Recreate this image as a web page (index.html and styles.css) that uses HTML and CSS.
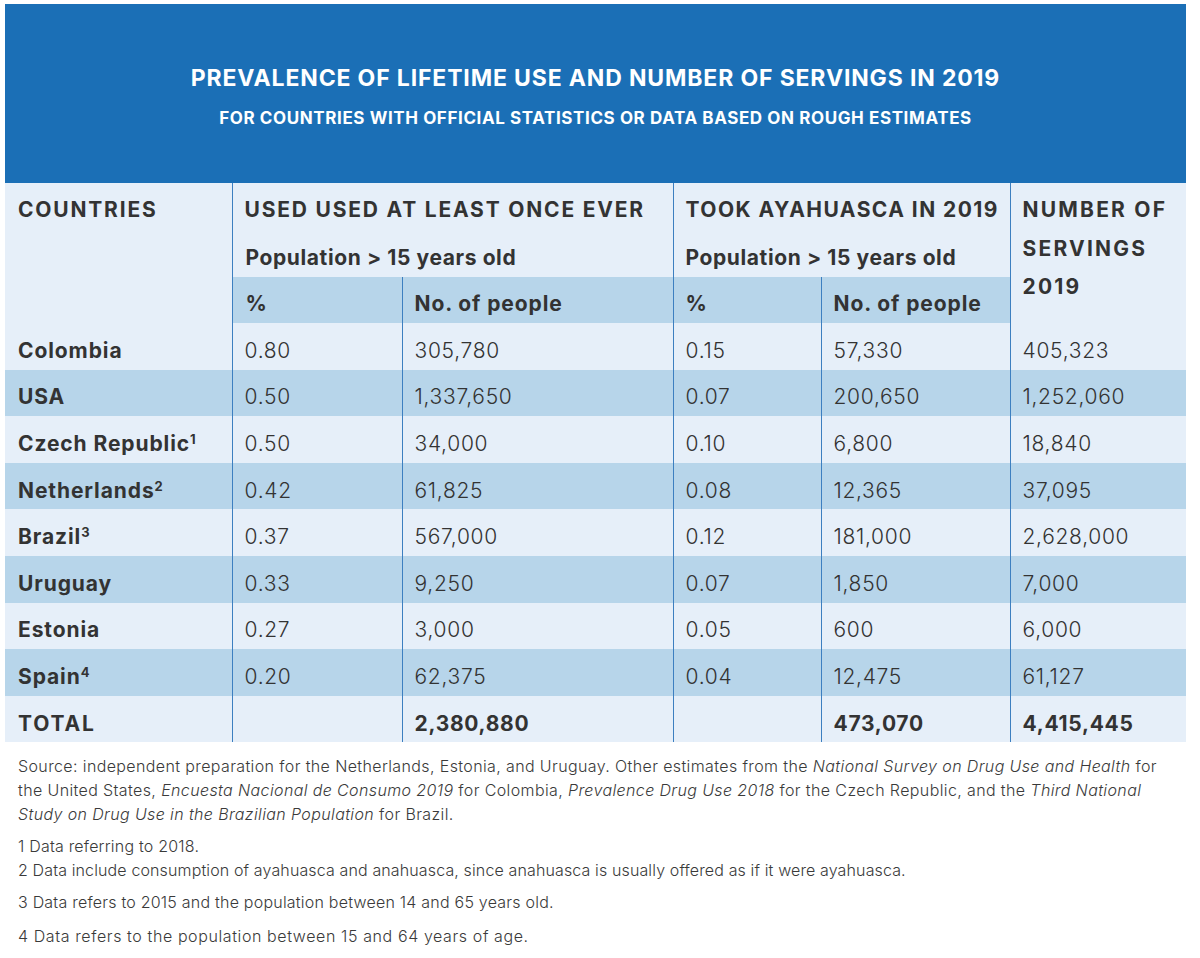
FILE: index.html
```html
<!DOCTYPE html>
<html lang="en">
<head>
<meta charset="utf-8">
<title>Prevalence of lifetime use and number of servings in 2019</title>
<link rel="stylesheet" href="styles.css">
</head>
<body>
<div class="panel">
  <header class="banner">
    <h1 class="title">PREVALENCE OF LIFETIME USE AND NUMBER OF SERVINGS IN 2019</h1>
    <p class="subtitle">FOR COUNTRIES WITH OFFICIAL STATISTICS OR DATA BASED ON ROUGH ESTIMATES</p>
  </header>
  <table class="data">
    <colgroup>
      <col class="c1"><col class="c2"><col class="c3"><col class="c4"><col class="c5"><col class="c6">
    </colgroup>
    <thead>
      <tr class="h1">
        <th class="lbl caps" rowspan="3">COUNTRIES</th>
        <th class="grp caps" colspan="2">USED USED AT LEAST ONCE EVER</th>
        <th class="grp caps grp-took" colspan="2">TOOK AYAHUASCA IN 2019</th>
        <th class="lbl serv caps" rowspan="3">NUMBER OF<br>SERVINGS<br>2019</th>
      </tr>
      <tr class="h2">
        <th class="pop" colspan="2">Population &gt; 15 years old</th>
        <th class="pop" colspan="2">Population &gt; 15 years old</th>
      </tr>
      <tr class="h3">
        <th class="sub">%</th>
        <th class="sub">No. of people</th>
        <th class="sub">%</th>
        <th class="sub">No. of people</th>
      </tr>
    </thead>
    <tbody>
      <tr><th>Colombia</th><td>0.80</td><td>305,780</td><td>0.15</td><td>57,330</td><td>405,323</td></tr>
      <tr class="alt"><th>USA</th><td>0.50</td><td>1,337,650</td><td>0.07</td><td>200,650</td><td>1,252,060</td></tr>
      <tr><th>Czech Republic<sup>1</sup></th><td>0.50</td><td>34,000</td><td>0.10</td><td>6,800</td><td>18,840</td></tr>
      <tr class="alt"><th>Netherlands<sup>2</sup></th><td>0.42</td><td>61,825</td><td>0.08</td><td>12,365</td><td>37,095</td></tr>
      <tr><th>Brazil<sup>3</sup></th><td>0.37</td><td>567,000</td><td>0.12</td><td>181,000</td><td>2,628,000</td></tr>
      <tr class="alt"><th>Uruguay</th><td>0.33</td><td>9,250</td><td>0.07</td><td>1,850</td><td>7,000</td></tr>
      <tr><th>Estonia</th><td>0.27</td><td>3,000</td><td>0.05</td><td>600</td><td>6,000</td></tr>
      <tr class="alt"><th>Spain<sup>4</sup></th><td>0.20</td><td>62,375</td><td>0.04</td><td>12,475</td><td>61,127</td></tr>
      <tr class="total"><th class="caps">TOTAL</th><td></td><td>2,380,880</td><td></td><td>473,070</td><td>4,415,445</td></tr>
    </tbody>
  </table>
  <div class="notes">
    <p class="source">Source: independent preparation for the Netherlands, Estonia, and Uruguay. Other estimates from the <em>National Survey on Drug Use and Health</em> for<br>the United States, <em>Encuesta Nacional de Consumo 2019</em> for Colombia, <em>Prevalence Drug Use 2018</em> for the Czech Republic, and the <em>Third National</em><br><em>Study on Drug Use in the Brazilian Population</em> for Brazil.</p>
    <p class="fn fn-1">1 Data referring to 2018.</p>
    <p class="fn fn-2">2 Data include consumption of ayahuasca and anahuasca, since anahuasca is usually offered as if it were ayahuasca.</p>
    <p class="fn fn-3">3 Data refers to 2015 and the population between 14 and 65 years old.</p>
    <p class="fn fn-4">4 Data refers to the population between 15 and 64 years of age.</p>
  </div>
</div>
</body>
</html>
```

FILE: styles.css
```css
html, body {
  margin: 0;
  padding: 0;
  background: #ffffff;
}

body {
  font-family: "Inter", "Lato", sans-serif;
  color: #333333;
}

.panel {
  width: 1181px;
  margin: 4px 0 0 5px;
}

.banner {
  background: #1b6fb6;
  height: 179px;
  box-sizing: border-box;
  padding-top: 61px;
  text-align: center;
  color: #ffffff;
}

.title {
  margin: 0;
  font-size: 23px;
  font-weight: 700;
  line-height: 26px;
  letter-spacing: 0.85px;
}

.subtitle {
  margin: 17px 0 0;
  font-size: 17px;
  font-weight: 700;
  line-height: 20px;
  letter-spacing: 0.6px;
}

.data {
  width: 1181px;
  border-collapse: collapse;
  table-layout: fixed;
  background: #e6eff9;
}

.c1 { width: 227px; }
.c2 { width: 170px; }
.c3 { width: 271px; }
.c4 { width: 148px; }
.c5 { width: 189px; }
.c6 { width: 176px; }

.data th,
.data td {
  box-sizing: border-box;
  text-align: left;
  vertical-align: middle;
  padding: 0 0 0 12px;
  font-size: 21px;
  line-height: 26px;
  color: #333333;
  white-space: nowrap;
  letter-spacing: 0.9px;
}

.data th:first-child {
  padding-left: 13px;
}

.data thead th {
  font-weight: 700;
}

.data .caps {
  letter-spacing: 1.8px;
}

.data .grp-took {
  letter-spacing: 1.45px;
}

.data .h1 { height: 50px; }
.data .h2 { height: 44px; }
.data .h3 { height: 46px; }

.data .lbl {
  vertical-align: top;
  padding-top: 14px;
}

.data .serv {
  line-height: 38.5px;
  padding-top: 8px;
  letter-spacing: 2.2px;
}

.data .grp {
  padding-top: 4px;
}

.data .pop {
  padding-top: 6px;
  letter-spacing: 0.6px;
}

.data .sub {
  background: #b7d5ea;
  padding-top: 7px;
}

.data tbody th {
  font-weight: 700;
}

.data tbody td {
  font-weight: 300;
  letter-spacing: 0.7px;
}

.data tbody th,
.data tbody td {
  padding-top: 9px;
}

.data tbody tr {
  height: 46.6px;
}

.data tbody tr.alt th,
.data tbody tr.alt td {
  background: #b7d5ea;
}

.data tbody tr.total td {
  font-weight: 700;
}

.data sup {
  font-size: 13px;
  line-height: 0;
  vertical-align: 7px;
  font-weight: 700;
  letter-spacing: 0;
}

/* column dividers */
.data .grp,
.data .pop,
.data .serv,
.data .h3 .sub,
.data tbody td {
  border-left: 1px solid #3d7fc0;
}

.notes {
  padding: 12px 0 0 13px;
  font-size: 16px;
  font-weight: 300;
  color: #3a3a3a;
  letter-spacing: 0.38px;
}

.notes p {
  margin: 0;
  line-height: 24px;
}

.notes em {
  font-style: italic;
}

.notes .fn-1 { margin-top: 8px; letter-spacing: 0.2px; }
.notes .fn-2 { margin-top: 0; letter-spacing: 0.13px; }
.notes .fn-3 { margin-top: 8px; letter-spacing: 0.22px; }
.notes .fn-4 { margin-top: 10px; letter-spacing: 0.6px; }
```
